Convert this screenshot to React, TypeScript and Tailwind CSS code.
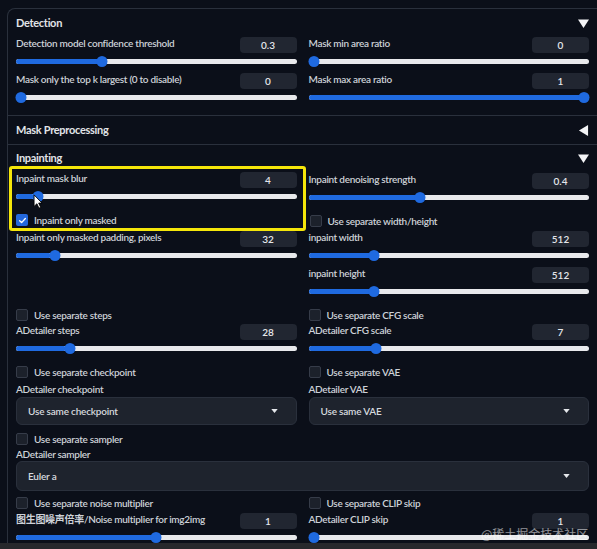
import React from 'react';

const font = { fontFamily: 'Lato, "Noto Sans CJK SC", sans-serif' };

const labelCls = 'text-[10px] font-semibold tracking-[-0.3px] text-[#cdd1d7] whitespace-nowrap';

function Slider({ label, value, pct }: { label: string; value: string; pct: number }) {
  return (
    <div className="flex flex-col">
      <div className="flex h-4 items-center justify-between">
        <span className={`${labelCls} pb-[3px]`}>{label}</span>
        <span className="flex h-4 w-[57px] items-center justify-center rounded-[4px] bg-[#212631] text-[10px] font-semibold text-[#e5e7eb]">
          {value}
        </span>
      </div>
      <div className="relative flex h-4 items-center">
        <div className="h-[5px] w-full rounded-full bg-[#e8e9ec]" />
        <div className="absolute left-0 h-[5px] rounded-full bg-[#1f6ae0]" style={{ width: `${pct}%` }} />
        <div
          className="absolute h-[11px] w-[11px] -translate-x-1/2 rounded-full bg-[#1f6ae0]"
          style={{ left: `calc(5px + (100% - 10px) * ${pct / 100})` }}
        />
      </div>
    </div>
  );
}

function Check({ label, checked = false }: { label: string; checked?: boolean }) {
  return (
    <div className="flex h-4 items-center gap-[6px]">
      {checked ? (
        <span className="flex h-[12px] w-[12px] items-center justify-center rounded-[2px] bg-[#2468dc]">
          <svg viewBox="0 0 12 12" className="h-[9px] w-[9px]">
            <path d="M2.2 6.3 4.8 8.8 9.8 3.4" fill="none" stroke="white" strokeWidth="1.8" strokeLinecap="round" strokeLinejoin="round" />
          </svg>
        </span>
      ) : (
        <span className="h-[12px] w-[12px] rounded-[2px] border border-[#363c49] bg-[#1c212b]" />
      )}
      <span className={labelCls}>{label}</span>
    </div>
  );
}

function Dropdown({ text, h }: { text: string; h: string }) {
  return (
    <div className={`flex ${h} items-center justify-between rounded-[6px] border border-[#2a303c] bg-[#1e232d] pl-[11px] pr-[18px]`}>
      <span className="text-[10px] font-semibold tracking-[-0.2px] text-[#d6d9de]">{text}</span>
      <svg viewBox="0 0 8 5" className="h-[4px] w-[7px]">
        <path d="M0 0h8L4 5z" fill="#e5e7eb" />
      </svg>
    </div>
  );
}

function Header({ title, open = true, h }: { title: string; open?: boolean; h: string }) {
  return (
    <div className={`flex ${h} items-center justify-between pr-[8px]`}>
      <span className="text-[11px] font-bold tracking-[-0.3px] text-[#e2e4e8]">{title}</span>
      <svg viewBox="0 0 12 12" className="h-[11px] w-[11px]">
        {open ? <path d="M0 1.5h12L6 11z" fill="#f3f4f6" /> : <path d="M11 0v12L1 6z" fill="#f3f4f6" />}
      </svg>
    </div>
  );
}

function Caption({ text, h }: { text: string; h: string }) {
  return <div className={`flex ${h} items-center ${labelCls}`}>{text}</div>;
}

export default function App() {
  return (
    <div className="relative h-[549px] w-[597px] overflow-hidden bg-[#0b0f19]" style={font}>
      <div className="h-[543px] overflow-hidden pt-[8px]">
        <div className="ml-[7px] h-full rounded-tl-[8px] border-l border-t border-[#2a303c] pl-[8px]">
          {/* Detection */}
          <Header title="Detection" h="h-[28px]" />
          <div className="grid grid-cols-2 gap-x-[12px] pb-[10px] pr-[8px]">
            <div className="flex flex-col">
              <Slider label="Detection model confidence threshold" value="0.3" pct={30} />
              <div className="mt-[4px]">
                <Slider label="Mask only the top k largest (0 to disable)" value="0" pct={0} />
              </div>
            </div>
            <div className="flex flex-col">
              <Slider label="Mask min area ratio" value="0" pct={0} />
              <div className="mt-[4px]">
                <Slider label="Mask max area ratio" value="1" pct={100} />
              </div>
            </div>
          </div>
          <div className="-ml-[8px] h-px bg-[#2a303c]" />
          <Header title="Mask Preprocessing" open={false} h="h-[28px]" />
          <div className="-ml-[8px] h-px bg-[#2a303c]" />
          {/* Inpainting */}
          <Header title="Inpainting" h="h-[27px]" />
          <div className="pr-[8px]">
            <div className="grid grid-cols-2 gap-x-[12px]">
              <div className="flex flex-col">
                <Slider label="Inpaint mask blur" value="4" pct={6.3} />
                <div className="mt-[8px]">
                  <Check label="Inpaint only masked" checked />
                </div>
                <div className="mt-[3px]">
                  <Slider label="Inpaint only masked padding, pixels" value="32" pct={12.5} />
                </div>
              </div>
              <div className="flex flex-col">
                <div className="mt-[1px]">
                  <Slider label="Inpaint denoising strength" value="0.4" pct={39.5} />
                </div>
                <div className="mt-[8px] pl-[1px]">
                  <Check label="Use separate width/height" />
                </div>
                <div className="mt-[2px]">
                  <Slider label="inpaint width" value="512" pct={22.5} />
                </div>
                <div className="mt-[4px]">
                  <Slider label="inpaint height" value="512" pct={22.5} />
                </div>
              </div>
            </div>

            <div className="mt-[8px] grid grid-cols-2 gap-x-[12px]">
              <div className="flex flex-col">
                <Check label="Use separate steps" />
                <div className="mt-[1px]">
                  <Slider label="ADetailer steps" value="28" pct={18} />
                </div>
                <div className="mt-[8px]">
                  <Check label="Use separate checkpoint" />
                </div>
                <Caption text="ADetailer checkpoint" h="mt-[1px] h-4" />
                <Dropdown text="Use same checkpoint" h="h-[28px]" />
              </div>
              <div className="flex flex-col">
                <Check label="Use separate CFG scale" />
                <div className="mt-[1px]">
                  <Slider label="ADetailer CFG scale" value="7" pct={23} />
                </div>
                <div className="mt-[8px]">
                  <Check label="Use separate VAE" />
                </div>
                <Caption text="ADetailer VAE" h="mt-[1px] h-4" />
                <Dropdown text="Use same VAE" h="h-[28px]" />
              </div>
            </div>

            <div className="mt-[6px]">
              <Check label="Use separate sampler" />
              <Caption text="ADetailer sampler" h="h-[14px]" />
              <Dropdown text="Euler a" h="h-[30px]" />
            </div>

            <div className="mt-[4px] grid grid-cols-2 gap-x-[12px]">
              <div className="flex flex-col">
                <Check label="Use separate noise multiplier" />
                <div className="mt-[2px]">
                  <Slider label="图生图噪声倍率/Noise multiplier for img2img" value="1" pct={50} />
                </div>
              </div>
              <div className="flex flex-col">
                <Check label="Use separate CLIP skip" />
                <div className="mt-[2px]">
                  <Slider label="ADetailer CLIP skip" value="1" pct={0} />
                </div>
              </div>
            </div>
          </div>
        </div>
      </div>
      <div className="h-[6px] bg-[#27282c]" />

      {/* highlight box */}
      <div className="pointer-events-none absolute left-[9px] top-[166px] h-[65px] w-[297px] rounded-[3px] border-[3px] border-[#f5e60a]" />

      {/* cursor */}
      <svg viewBox="0 0 12 18" className="absolute left-[33px] top-[194px] h-[16px] w-[11px]">
        <path d="M1 1v13l3.2-3 2.3 5 2-1-2.3-4.8H10z" fill="white" stroke="black" strokeWidth="1" strokeLinejoin="round" />
      </svg>

      {/* watermark */}
      <div className="pointer-events-none absolute left-[481px] top-[527px] text-[12px] leading-[14px] text-white/55" style={{ fontFamily: '"Noto Sans CJK SC", sans-serif' }}>
        @稀土掘金技术社区
      </div>
    </div>
  );
}
